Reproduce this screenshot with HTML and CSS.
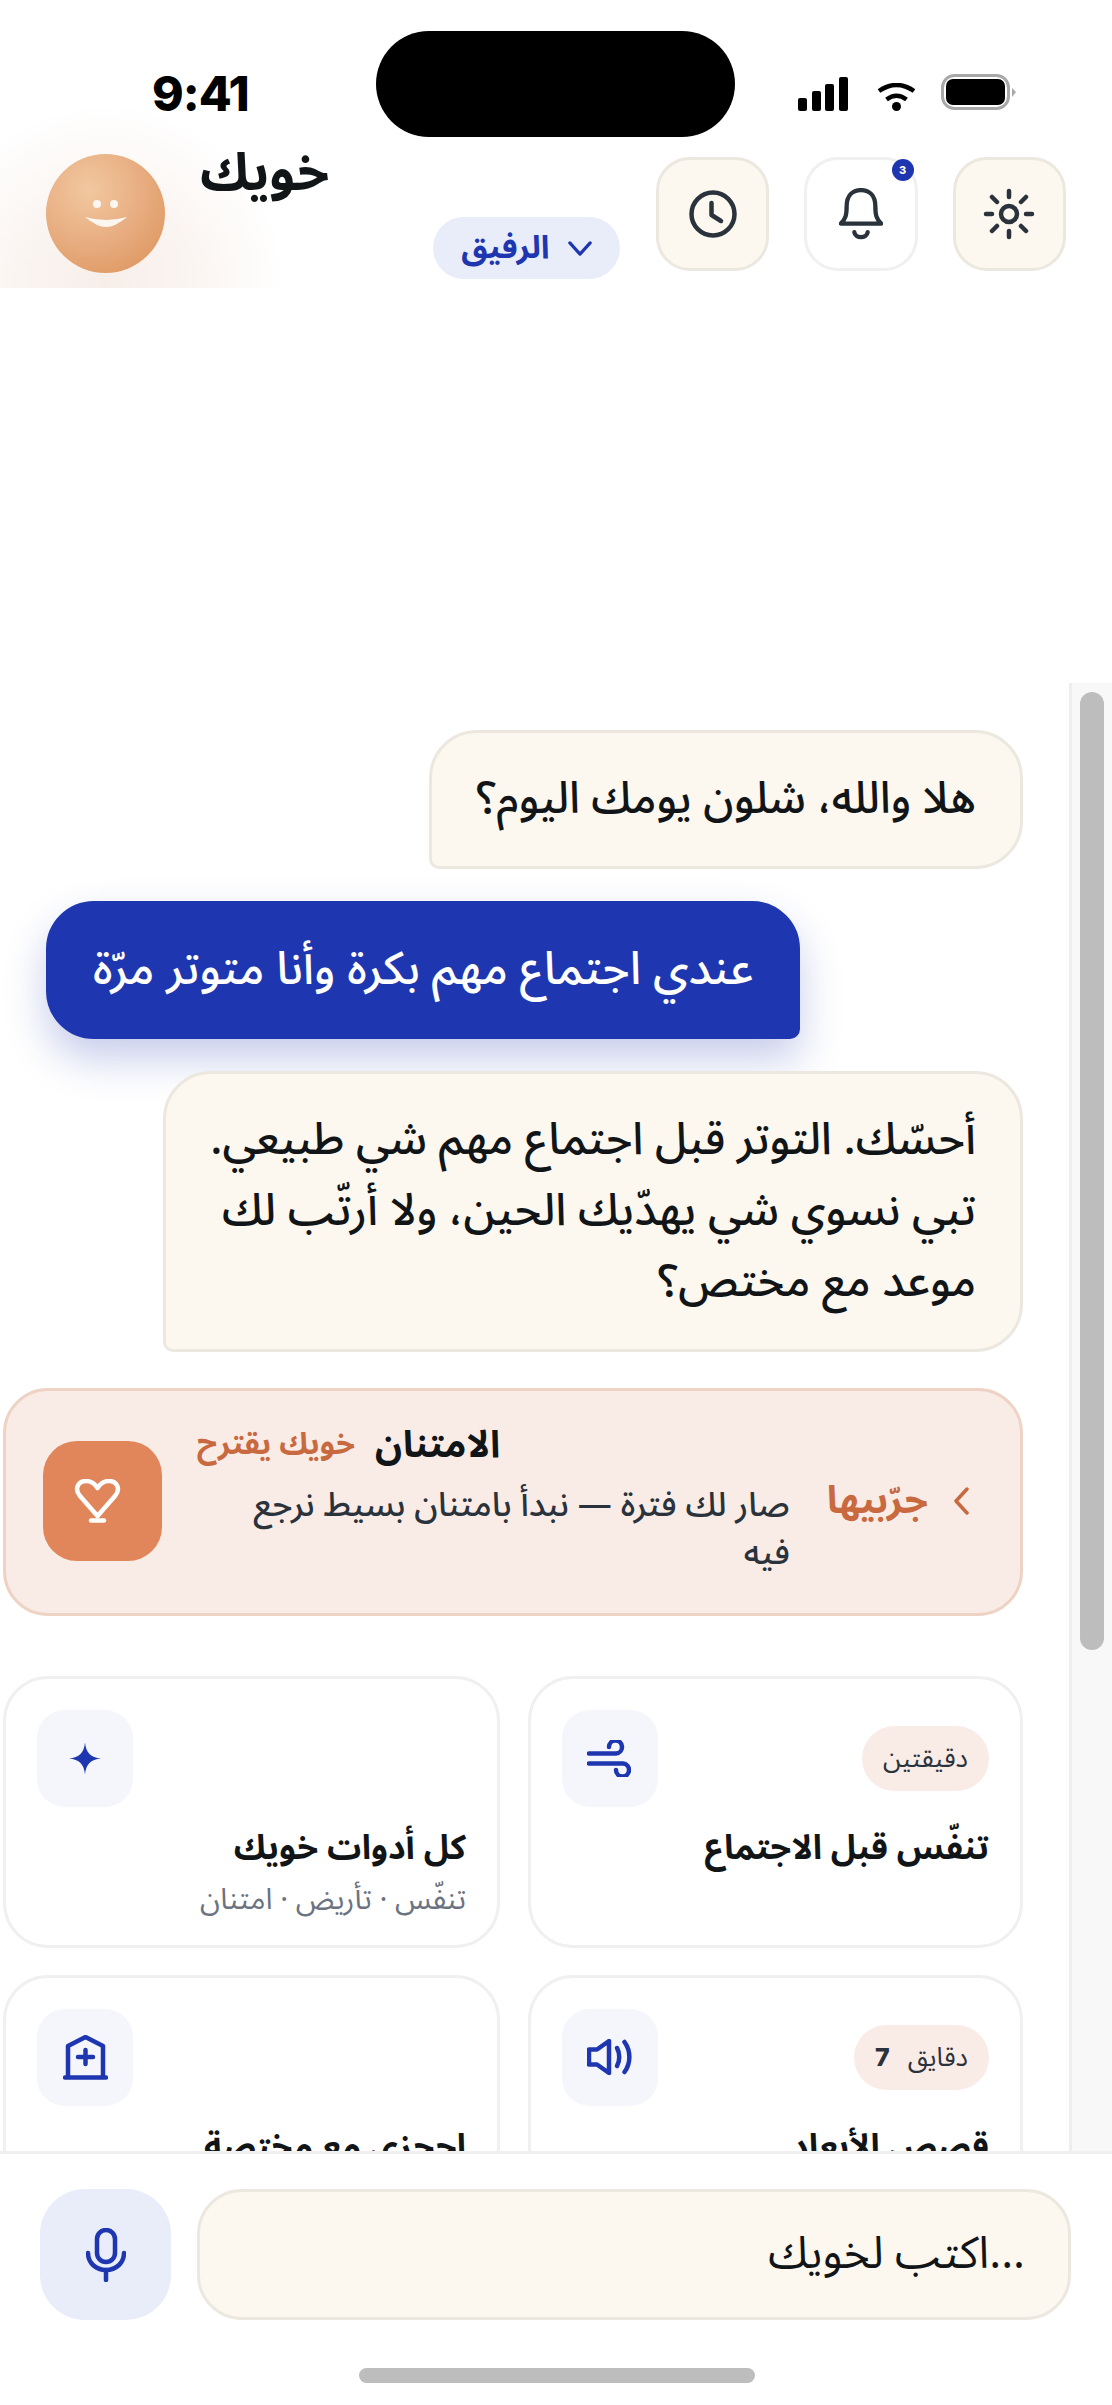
FILE: index.html
```html
<!DOCTYPE html>
<html lang="ar">
    <head>
        <meta charset="utf-8">
        <link rel="stylesheet" href="styles.css">
    </head>
    <body>
        <div class="screen">
            <div class="glow"></div>
            <div class="island"></div>
            <header class="status">
                <span class="time">9:41</span>
                <div class="status-icons">
                    <svg class="signal" width="50" height="34" viewBox="0 0 50 34"><rect x="0" y="21" width="9" height="13" rx="2"/><rect x="14" y="14" width="9" height="20" rx="2"/><rect x="27" y="7" width="9" height="27" rx="2"/><rect x="41" y="0" width="9" height="34" rx="2"/></svg>
                    <svg class="wifi" width="39" height="28" viewBox="0 0 39 28" fill="none" stroke="#000" stroke-width="4.500"><path d="M2 8 Q19.500 -4 37 8"/><path d="M9.500 16.500 Q19.500 9 29.500 16.500"/><circle cx="19.500" cy="23.500" r="4.500" fill="#000" stroke="none"/></svg>
                    <svg class="battery" width="76" height="36" viewBox="0 0 76 36"><rect x="1.500" y="1.500" width="66" height="33" rx="12" fill="none" stroke="#a8a8a8" stroke-width="3"/><rect x="5" y="5" width="59" height="26" rx="7"/><path d="M71 14 L75 18 L71 23Z" fill="#a8a8a8"/></svg>
                </div>
            </header>
            <section class="topbar">
                <div class="avatar">
                    <div class="eyes"><span></span><span></span></div>
                    <svg class="smile" width="42" height="10" viewBox="0 0 42 10"><path d="M0 0 Q21 6 42 0 Q30 10 21 10 Q12 10 0 0Z" fill="#fbf6ef"/></svg>
                </div>
                <div class="brand">خويك</div>
                <div class="pill">
                    <span>الرفيق</span>
                    <svg width="24" height="15" viewBox="0 0 26 16" fill="none" stroke="#1e37b0" stroke-width="3.500" stroke-linecap="round" stroke-linejoin="round"><path d="M2 2 L13 14 L24 2"/></svg>
                </div>
                <div class="tools">
                    <button class="tool">
                        <svg width="48" height="48" viewBox="0 0 48 48" fill="none" stroke="#2a323c" stroke-width="4.500" stroke-linecap="round" stroke-linejoin="round"><circle cx="24" cy="24" r="21.500"/><path d="M22.500 13 V25 L32 31"/></svg>
                    </button>
                    <button class="tool plain">
                        <svg width="44" height="52" viewBox="0 0 46 54" fill="none" stroke="#2a323c" stroke-width="4.500" stroke-linecap="round" stroke-linejoin="round"><path d="M2 37 H44 C39 32 38 28 38 19 C38 8 32 2 23 2 C14 2 8 8 8 19 C8 28 7 32 2 37Z"/><path d="M16 46 C17 53 29 53 30 46"/></svg>
                        <span class="badge">3</span>
                    </button>
                    <button class="tool">
                        <svg width="52" height="52" viewBox="0 0 52 52" fill="none" stroke="#2a323c" stroke-width="4.500" stroke-linecap="round"><circle cx="26" cy="26" r="8"/><path d="M26 3 V9 M26 43 V49 M3 26 H9 M43 26 H49 M9 9 L14 14 M43 9 L38 14 M9 43 L14 38 M43 43 L38 38"/></svg>
                    </button>
                </div>
            </section>
            <div class="main">
                <div class="chat" dir="rtl">
                    <div class="bubble bot greet">هلا والله، شلون يومك اليوم؟</div>
                    <div class="bubble user">عندي اجتماع مهم بكرة وأنا متوتر مرّة</div>
                    <div class="bubble bot">أحسّك. التوتر قبل اجتماع مهم شي طبيعي.<br>تبي نسوي شي يهدّيك الحين، ولا أرتّب لك<br>موعد مع مختص؟</div>
                    <div class="suggest">
                        <svg class="chev" width="15" height="28" viewBox="0 0 15 28" fill="none" stroke="#c8693f" stroke-width="3.500" stroke-linecap="round" stroke-linejoin="round"><path d="M13 2 L2 14 L13 26"/></svg>
                        <span class="try">جرّبيها</span>
                        <div class="suggest-body">
                            <div class="suggest-head"><b>الامتنان</b><span>خويك يقترح</span></div>
                            <p>صار لك فترة — نبدأ بامتنان بسيط نرجع فيه</p>
                        </div>
                        <div class="heart-tile">
                            <svg class="heart" width="47" height="44" viewBox="0 0 47 44" fill="none" stroke="#fff" stroke-width="4.500" stroke-linejoin="round" stroke-linecap="round"><path d="M23.500 37 L6 17 C0 10 4 2 12 2 C17 2 21 5 23.500 9 C26 5 30 2 35 2 C43 2 47 10 41 17Z"/><path d="M17 41.500 H30"/></svg>
                        </div>
                    </div>
                    <div class="cards">
                        <div class="card">
                            <div class="card-top">
                                <span class="chip">دقيقتين</span>
                                <span class="tile">
                                    <svg class="wind" width="44" height="37" viewBox="0 0 44 37" fill="none" stroke="#1e37b0" stroke-width="4.500" stroke-linecap="round"><path d="M2 13.500 H29 A6.500 6.500 0 1 0 22 7"/><path d="M2 23.500 H36 A6.500 6.500 0 1 1 29 30"/></svg>
                                </span>
                            </div>
                            <h3>تنفّس قبل الاجتماع</h3>
                        </div>
                        <div class="card">
                            <div class="card-top end">
                                <span class="tile">
                                    <svg width="32" height="33" viewBox="0 0 34 34"><path d="M17 0 C18 11 23 16 34 17 C23 18 18 23 17 34 C16 23 11 18 0 17 C11 16 16 11 17 0Z" fill="#1e37b0"/></svg>
                                </span>
                            </div>
                            <h3>كل أدوات خويك</h3>
                            <p class="sub">تنفّس · تأريض · امتنان</p>
                        </div>
                        <div class="card">
                            <div class="card-top">
                                <span class="chip"><span>دقايق</span><b>7</b></span>
                                <span class="tile">
                                    <svg width="46" height="36" viewBox="0 0 46 36" fill="none" stroke="#1e37b0" stroke-width="4.500" stroke-linecap="round" stroke-linejoin="round"><path d="M2 10.500 H10 L22 2 V34 L10 25.500 H2Z"/><path d="M30 9 C33 14 33 22 30 27"/><path d="M37.500 3 C44 12 44 24 37.500 33"/></svg>
                                </span>
                            </div>
                            <h3>قصص الأبعاد</h3>
                        </div>
                        <div class="card">
                            <div class="card-top end">
                                <span class="tile">
                                    <svg width="45" height="45" viewBox="0 0 45 45" fill="none" stroke="#1e37b0" stroke-width="4.500" stroke-linejoin="round" stroke-linecap="round"><path d="M5 42 V11 L22.500 2 L40 11 V42"/><path d="M2 42.500 H43"/><path d="M22.500 15 V29 M15 22 H30"/></svg>
                                </span>
                            </div>
                            <h3>احجزي مع مختصة</h3>
                        </div>
                    </div>
                </div>
                <div class="scrollbar"><div class="thumb"></div></div>
            </div>
            <footer class="composer">
                <button class="mic">
                    <svg width="40" height="54" viewBox="0 0 40 54" fill="none" stroke="#1e37b0" stroke-width="4.500" stroke-linecap="round"><rect x="11" y="2" width="18" height="32" rx="9"/><path d="M2 25 C2 35 10 42 20 42 C30 42 38 35 38 25"/><path d="M20 42 V52"/></svg>
                </button>
                <div class="field">اكتب لخويك...</div>
            </footer>
            <div class="home"><span></span></div>
        </div>
    </body>
</html>
```

FILE: styles.css
```css
*{
    box-sizing:border-box;
}
html,body{
    margin:0;
    padding:0;
    background:#fff;
}
body{
    font-family:"Noto Sans Arabic","Noto Naskh Arabic","DejaVu Sans",sans-serif;
    color:#111518;
}
.screen{
    width:1112px;
    height:2405px;
    position:relative;
    overflow:hidden;
    display:flex;
    flex-direction:column;
}
.glow{
    position:absolute;
    left:0;
    top:90px;
    width:300px;
    height:198px;
    background:radial-gradient(circle 180px at 105px 195px,#f7eee9 0,#fbf6f3 55%,#fff 100%);
}
.island{
    position:absolute;
    left:376px;
    top:31px;
    width:359px;
    height:106px;
    border-radius:53px;
    background:#000;
}
.status{
    height:137px;
    position:relative;
    flex:none;
}
.time{
    position:absolute;
    left:152px;
    top:62px;
    font:800 48px/64px Inter,sans-serif;
    letter-spacing:-1px;
    color:#000;
}
.status-icons{
    position:absolute;
    left:798px;
    top:74px;
    display:flex;
    align-items:flex-end;
    height:37px;
}
.wifi{
    margin-left:29px;
}
.battery{
    margin-left:25px;
    margin-bottom:1px;
}
.topbar{
    height:151px;
    flex:none;
    position:relative;
    display:flex;
    align-items:flex-start;
    padding:17px 46px 0 46px;
}
.avatar{
    width:119px;
    height:119px;
    border-radius:50%;
    flex:none;
    background:radial-gradient(circle at 36% 30%,#f2c8a0 0,#e9b085 42%,#dc935a 95%);
    display:flex;
    flex-direction:column;
    align-items:center;
    padding-top:46px;
}
.eyes{
    display:flex;
    gap:9px;
}
.eyes span{
    width:8px;
    height:8px;
    border-radius:50%;
    background:#fbf6ef;
}
.smile{
    margin-top:9px;
}
.brand{
    margin-left:35px;
    margin-top:-16px;
    font-size:52px;
    line-height:72px;
    font-weight:700;
}
.pill{
    margin-left:104px;
    margin-top:63px;
    width:187px;
    height:62px;
    border-radius:31px;
    background:#e9edfa;
    color:#1e37b0;
    font-size:32px;
    font-weight:700;
    display:flex;
    align-items:center;
    justify-content:center;
    gap:19px;
}
.tools{
    margin-left:auto;
    margin-top:3px;
    display:flex;
    gap:35px;
}
.tool{
    width:113.300px;
    height:114px;
    border-radius:34px;
    border:3px solid #ece8df;
    background:#fcf8ef;
    padding:0;
    display:flex;
    align-items:center;
    justify-content:center;
    position:relative;
}
.tool.plain{
    background:#fff;
    border-color:#f0f0f0;
}
.badge{
    position:absolute;
    right:1px;
    top:-1px;
    width:22px;
    height:22px;
    border-radius:50%;
    background:#1e37b0;
    color:#fff;
    font:800 11px/22px Inter,sans-serif;
    text-align:center;
}
.main{
    margin-top:395px;
    height:1468px;
    flex:none;
    display:flex;
    overflow:hidden;
}
.chat{
    width:1069px;
    flex:none;
    padding:47px 46px 0 3px;
    display:flex;
    flex-direction:column;
}
.chat > *{
    flex-shrink:0;
}
.bubble{
    border-radius:48px;
    font-size:44.800px;
    font-weight:500;
    line-height:70.700px;
    padding:31px 44px;
    width:fit-content;
    margin-bottom:32px;
}
.greet{
    font-size:44px;
}
.bot{
    background:#fcf8ef;
    border:3px solid #ece8df;
    border-bottom-left-radius:10px;
}
.user{
    font-size:45.800px;
    background:#1e37b0;
    color:#fff;
    border:3px solid #1e37b0;
    border-bottom-right-radius:10px;
    align-self:flex-end;
    margin-left:43px;
    box-shadow:0 20px 40px rgba(30,55,176,.25);
}
.suggest{
    margin-top:4px;
    height:228px;
    background:#f9ece7;
    border:3px solid #eed3c5;
    border-radius:45px;
    display:flex;
    align-items:center;
    padding:0 51px 2px 37px;
}
.chev{
    flex:none;
    margin-left:26px;
}
.try{
    color:#c8693f;
    font-size:38px;
    font-weight:700;
    margin-left:37px;
    flex:none;
}
.suggest-body{
    flex:1;
    min-width:0;
    margin-bottom:20px;
}
.suggest-head{
    display:flex;
    justify-content:flex-end;
    align-items:center;
    gap:20px;
    margin-left:-3px;
}
.suggest-head b{
    font-size:37.500px;
}
.suggest-head span{
    color:#c8693f;
    font-size:30.500px;
    font-weight:700;
}
.suggest p{
    margin:-4px 0 0;
    max-width:545px;
    font-size:34px;
    line-height:48px;
    font-weight:500;
    color:#2a323c;
}
.heart-tile{
    width:119px;
    height:120px;
    flex:none;
    border-radius:34px;
    background:#e0865a;
    display:flex;
    align-items:center;
    justify-content:center;
    margin-right:38px;
}
.heart{
    margin-right:10px;
}
.cards{
    margin-top:60px;
    display:grid;
    grid-template-columns:495px 497px;
    grid-auto-rows:272px;
    gap:27px 28px;
}
.card{
    border:3px solid #f0f0f0;
    border-radius:45px;
    padding:31px 31px 0;
}
.card-top{
    display:flex;
    justify-content:space-between;
    align-items:center;
    height:97px;
}
.card-top.end{
    justify-content:flex-end;
}
.chip{
    height:65px;
    padding:0 21px;
    border-radius:33px;
    background:#f9ece7;
    color:#2a323c;
    font-size:26px;
    display:flex;
    align-items:center;
    gap:18px;
}
.chip b{
    font:800 25px Inter,sans-serif;
}
.tile{
    width:96px;
    height:97px;
    border-radius:28px;
    background:#f5f6fc;
    display:flex;
    align-items:center;
    justify-content:center;
}
.wind{
    margin-right:3px;
}
.card h3{
    margin:16px 0 0;
    font-size:34px;
    line-height:50px;
    font-weight:700;
}
.sub{
    margin:7px 0 0;
    font-size:29.500px;
    line-height:40px;
    color:#6b7280;
}
.scrollbar{
    width:43px;
    flex:none;
    background:#f8f8f8;
    border-left:3px solid #eee;
    padding:9px 8px 0 8px;
}
.thumb{
    height:958px;
    border-radius:12px;
    background:#bdbdbd;
}
.composer{
    height:254px;
    flex:none;
    border-top:3px solid #f0f0f0;
    padding:35px 41px 0 40px;
    display:flex;
    gap:26px;
    align-items:flex-start;
}
.mic{
    width:131px;
    height:131px;
    border:0;
    border-radius:45px;
    background:#e9edfa;
    display:flex;
    align-items:center;
    justify-content:center;
    flex:none;
}
.field{
    flex:1;
    height:131px;
    border:3px solid #ece8df;
    border-radius:45px;
    background:#fcf8ef;
    padding:0 43px;
    font-size:44.500px;
    line-height:125px;
    text-align:right;
}
.home{
    position:absolute;
    left:0;
    right:0;
    bottom:22px;
    display:flex;
    justify-content:center;
}
.home span{
    width:396px;
    height:15px;
    margin-left:2px;
    border-radius:8px;
    background:#bdbdbd;
}
```
